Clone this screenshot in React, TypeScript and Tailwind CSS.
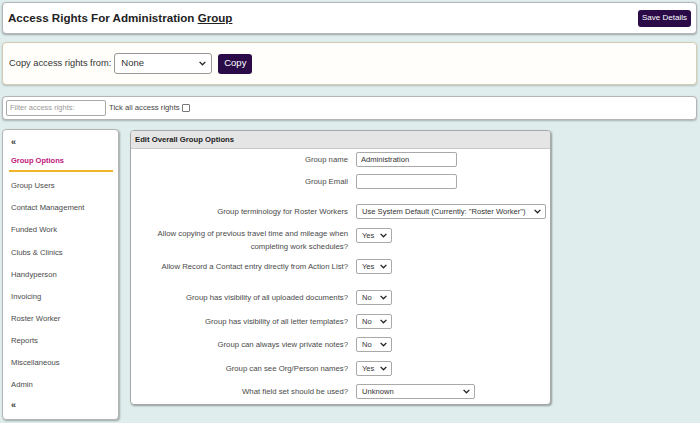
import React from "react";

const Chevron = ({ s = 1 }: { s?: number }) => (
  <svg width={7 * s} height={5 * s} viewBox="0 0 7 5" className="shrink-0">
    <path d="M0.6 0.9 L3.5 3.8 L6.4 0.9" stroke="#222" strokeWidth="1.3" fill="none" />
  </svg>
);

const Sel = ({ text, cls }: { text: string; cls: string }) => (
  <div className={`flex h-[15px] items-center justify-between rounded-[2px] border border-[#a9a9a9] bg-white pl-[5px] pr-[4px] text-[7.6px] text-[#333] ${cls}`}>
    <span className="whitespace-nowrap">{text}</span>
    <Chevron />
  </div>
);

const Inp = ({ text }: { text?: string }) => (
  <div className="flex h-[15px] w-[101px] items-center rounded-[2px] border border-[#a9a9a9] bg-white pl-[4px] text-[7.6px] text-[#333]">
    {text}
  </div>
);

const Row = ({ label, mt, h = "h-[15px]", children, start }: { label: React.ReactNode; mt: string; h?: string; children: React.ReactNode; start?: boolean }) => (
  <div className={`flex ${start ? "items-start" : "items-center"} ${mt} ${h}`}>
    <div className={`w-[217px] text-right text-[7.75px] leading-[13px] text-[#4a4a4a] ${start ? "-mt-[1px]" : ""}`}>{label}</div>
    <div className="ml-[8px]">{children}</div>
  </div>
);

const items = [
  "Group Users",
  "Contact Management",
  "Funded Work",
  "Clubs & Clinics",
  "Handyperson",
  "Invoicing",
  "Roster Worker",
  "Reports",
  "Miscellaneous",
  "Admin",
];

export default function App() {
  return (
    <div
      className="h-[423px] w-[700px] overflow-hidden bg-[#dfeded] pl-[2px] pr-[3px] pt-[2px]"
      style={{ fontFamily: '"Liberation Sans", Arial, sans-serif' }}
    >
      {/* Header */}
      <div className="flex h-[32px] items-center justify-between rounded-[4px] border border-[#b4b4b4] bg-white pl-[5px] pr-[5px] shadow-[0_1px_2px_rgba(0,0,0,0.3)]">
        <div className="text-[11.6px] font-bold text-[#222]">
          Access Rights For Administration <span className="underline">Group</span>
        </div>
        <div className="flex h-[17px] w-[53px] items-center justify-center rounded-[3px] bg-[#2a0b47] text-[8px] text-white">
          Save Details
        </div>
      </div>

      {/* Copy panel */}
      <div className="mt-[8px] flex h-[43px] items-center rounded-[4px] border border-[#d3ccb4] bg-[#fffefa] pl-[6px] shadow-[0_1px_2px_rgba(0,0,0,0.2)]">
        <span className="text-[9.3px] text-[#333]">Copy access rights from:</span>
        <div className="ml-[3px] flex h-[21px] w-[98px] items-center justify-between rounded-[3px] border border-[#999] bg-white pl-[6px] pr-[5px] text-[9.5px] text-[#333]">
          <span>None</span>
          <Chevron />
        </div>
        <div className="ml-[6px] flex h-[20px] w-[34px] items-center justify-center rounded-[3px] bg-[#2a0b47] text-[9.5px] text-white">
          Copy
        </div>
      </div>

      {/* Filter panel */}
      <div className="mt-[11px] flex h-[24px] items-center rounded-[4px] border border-[#b4b4b4] bg-white pl-[3px] shadow-[0_1px_2px_rgba(0,0,0,0.25)]">
        <div className="flex h-[16px] w-[100px] items-center rounded-[2px] border border-[#a9a9a9] pl-[3px] text-[7.5px] text-[#999]">
          Filter access rights:
        </div>
        <span className="ml-[3px] text-[7.7px] text-[#444]">Tick all access rights</span>
        <div className="ml-[2px] h-[8px] w-[8px] rounded-[1px] border border-[#777] bg-white" />
      </div>

      {/* Content */}
      <div className="mt-[9px] flex items-start">
        {/* Sidebar */}
        <div className="h-[291px] w-[117px] rounded-[4px] border border-[#b4b4b4] bg-white pt-[4px] shadow-[1px_1px_2px_rgba(0,0,0,0.3)]">
          <div className="flex h-[18px] items-center pl-[8px] text-[9px] font-bold text-[#333]">«</div>
          <div className="ml-[6px] mr-[5px] flex h-[20px] items-center border-b-2 border-[#f0b429] pl-[2px] text-[7.5px] font-bold text-[#c0157a]">
            Group Options
          </div>
          <div className="mt-[3px]">
            {items.map((it) => (
              <div key={it} className="flex h-[22.1px] items-center pl-[8px] text-[7.7px] text-[#4a4a4a]">
                {it}
              </div>
            ))}
          </div>
          <div className="flex h-[20px] items-center pl-[8px] text-[9px] font-bold text-[#333]">«</div>
        </div>

        {/* Main panel */}
        <div className="ml-[11px] mt-[1px] h-[275px] w-[421px] rounded-[4px] border border-[#a8a8a8] bg-white shadow-[1px_1px_2px_rgba(0,0,0,0.35)]">
          <div className="flex h-[18px] items-center rounded-t-[3px] border-b border-[#c8c8c8] bg-[#e5e5e5] pl-[4px] text-[7.7px] font-bold text-[#222]">
            Edit Overall Group Options
          </div>
          <Row label="Group name" mt="mt-[3px]">
            <Inp text="Administration" />
          </Row>
          <Row label="Group Email" mt="mt-[7px]">
            <Inp />
          </Row>
          <Row label="Group terminology for Roster Workers" mt="mt-[15px]">
            <Sel text={'Use System Default (Currently: "Roster Worker")'} cls="w-[190px]" />
          </Row>
          <Row
            label={
              <>
                Allow copying of previous travel time and mileage when
                <br />
                completing work schedules?
              </>
            }
            mt="mt-[9px]"
            h="h-[26px]"
            start
          >
            <Sel text="Yes" cls="w-[36px]" />
          </Row>
          <Row label="Allow Record a Contact entry directly from Action List?" mt="mt-[5px]">
            <Sel text="Yes" cls="w-[36px]" />
          </Row>
          <Row label="Group has visibility of all uploaded documents?" mt="mt-[16px]">
            <Sel text="No" cls="w-[36px]" />
          </Row>
          <Row label="Group has visibility of all letter templates?" mt="mt-[9px]">
            <Sel text="No" cls="w-[36px]" />
          </Row>
          <Row label="Group can always view private notes?" mt="mt-[8px]">
            <Sel text="No" cls="w-[36px]" />
          </Row>
          <Row label="Group can see Org/Person names?" mt="mt-[9px]">
            <Sel text="Yes" cls="w-[36px]" />
          </Row>
          <Row label="What field set should be used?" mt="mt-[8px]">
            <Sel text="Unknown" cls="w-[119px]" />
          </Row>
        </div>
      </div>
    </div>
  );
}
